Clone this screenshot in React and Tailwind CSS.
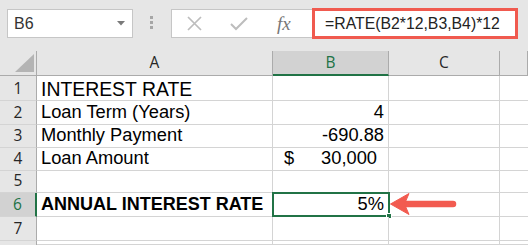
import React from "react"

const rows = [
  { n: 1, h: "h-[25px]", a: "INTEREST RATE", big: true },
  { n: 2, h: "h-[24px]", a: "Loan Term (Years)", b: "4" },
  { n: 3, h: "h-[23px]", a: "Monthly Payment", b: "-690.88" },
  { n: 4, h: "h-[23px]", a: "Loan Amount", money: "30,000" },
  { n: 5, h: "h-[22px]" },
  { n: 6, h: "h-[24px]", a: "ANNUAL INTEREST RATE", bold: true, b: "5%", selected: true },
  { n: 7, h: "h-[24px]" },
  { n: 8, h: "h-[4px]" },
]

function HeaderCell({ label, active }) {
  return (
    <div
      className={`flex items-center justify-center border-r border-[#ababab] font-['Open_Sans','Noto_Sans',sans-serif] text-[15.5px] leading-none ${
        active ? "bg-[#d2d2d2] text-[#217346] border-b-2 border-b-[#217346]" : "border-b border-b-[#ababab] text-[#262626]"
      }`}
    >
      {label}
    </div>
  )
}

function Arrow() {
  return (
    <svg className="absolute left-[388px] top-[190px]" width="72" height="28" viewBox="0 0 72 28">
      <line x1="16" y1="14" x2="65" y2="14" stroke="#f25b50" strokeWidth="6.5" strokeLinecap="round" />
      <path d="M2.5 14 L21 3.5 L16.5 14 L21 24.5 Z" fill="#f25b50" stroke="#f25b50" strokeWidth="1" strokeLinejoin="round" />
    </svg>
  )
}

export default function App() {
  return (
    <div className="relative w-[528px] h-[245px] overflow-hidden bg-[#e6e6e6] font-['Liberation_Sans',Arial,sans-serif] text-black">
      {/* Formula bar */}
      <div className="h-[51px] flex items-start pt-[8px] pl-[7px]">
        <div className="mt-[1px] w-[126px] h-[29px] border border-[#c6c6c6] bg-white flex items-center justify-between pl-[6px] pr-[7px]">
          <span className="text-[16px] text-[#333] leading-none">B6</span>
          <svg width="8" height="5" viewBox="0 0 8 5">
            <path d="M0 0 H8 L4 4.5 Z" fill="#7a7a7a" />
          </svg>
        </div>
        <div className="ml-[17px] mt-[8px] flex flex-col gap-[2px]">
          <span className="block w-[3px] h-[3px] bg-[#a6a6a6]" />
          <span className="block w-[3px] h-[3px] bg-[#a6a6a6]" />
          <span className="block w-[3px] h-[3px] bg-[#a6a6a6]" />
        </div>
        <div className="ml-[18px] flex items-center">
          <div className="w-[141px] h-[29px] border border-r-0 border-[#c6c6c6] bg-white flex items-center pl-[15px]">
            <svg width="15" height="15" viewBox="0 0 15 15">
              <path d="M1 1 L14 14 M14 1 L1 14" stroke="#bdbdbd" strokeWidth="1.7" />
            </svg>
            <svg className="ml-[28px]" width="18" height="15" viewBox="0 0 18 15">
              <path d="M1 8 L6 13 L17 2" stroke="#bdbdbd" strokeWidth="2" fill="none" />
            </svg>
            <span className="ml-[29px] font-['Liberation_Serif',serif] italic text-[19px] leading-none text-[#777]">fx</span>
          </div>
          <div className="w-[206px] h-[31px] border-[3px] border-[#f05a4f] bg-white flex items-center pl-[10px]">
            <span className="text-[15.8px] leading-none text-[#222]">=RATE(B2*12,B3,B4)*12</span>
          </div>
        </div>
      </div>

      {/* Sheet */}
      <div className="grid grid-cols-[37px_236px_116px_111px_28px]">
        <div className="h-[25px] border-r border-b border-[#ababab] flex items-end justify-end pr-[2px] pb-[3px]">
          <svg width="19" height="18" viewBox="0 0 19 18">
            <path d="M19 0 V18 H0 Z" fill="#b4b4b4" />
          </svg>
        </div>
        <HeaderCell label="A" />
        <HeaderCell label="B" active />
        <HeaderCell label="C" />
        <HeaderCell label="" />

        {rows.map((r) => (
          <React.Fragment key={r.n}>
            <div
              className={`${r.h} border-b border-[#d4d4d4] flex items-end justify-center pb-[4px] font-['Open_Sans','Noto_Sans',sans-serif] text-[15.5px] leading-none ${
                r.selected ? "bg-[#d2d2d2] text-[#217346] border-r-2 border-r-[#217346]" : "border-r border-r-[#ababab] text-[#262626]"
              }`}
            >
              {r.n === 8 ? "" : r.n}
            </div>
            <div
              className={`${r.h} bg-white border-r border-b border-[#d4d4d4] flex items-end pl-[4px] whitespace-nowrap leading-none ${
                r.big ? "text-[19.4px] pb-[1px]" : r.bold ? "text-[18px] pb-[3px]" : "text-[18.3px] pb-[3px]"
              } ${r.bold ? "font-bold" : ""}`}
            >
              {r.a}
            </div>
            <div className={`${r.h} relative bg-white border-r border-b border-[#d4d4d4] text-[18.3px] leading-none`}>
              {r.money ? (
                <div className="h-full flex items-end justify-between pl-[11px] pr-[11px] pb-[3px]">
                  <span>$</span>
                  <span>{r.money}</span>
                </div>
              ) : (
                <div className="h-full flex items-end justify-end pr-[4px] pb-[3px]">{r.b}</div>
              )}
              {r.selected && (
                <div className="absolute -left-[1px] -top-[1px] w-[118px] h-[25px] border-2 border-[#217346]">
                  <div className="absolute -right-[4px] -bottom-[4px] w-[6px] h-[6px] bg-[#217346] border border-white" />
                </div>
              )}
            </div>
            <div className={`${r.h} bg-white border-r border-b border-[#d4d4d4]`} />
            <div className={`${r.h} bg-white border-b border-[#d4d4d4]`} />
          </React.Fragment>
        ))}
      </div>

      <Arrow />
    </div>
  )
}
